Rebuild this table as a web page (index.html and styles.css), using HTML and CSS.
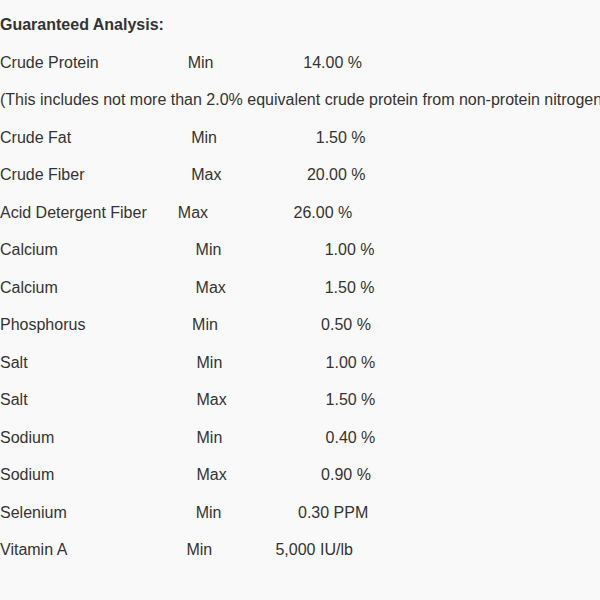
FILE: index.html
```html
<!DOCTYPE html>
<html lang="en">
<head>
<meta charset="utf-8">
<title>Guaranteed Analysis</title>
<link rel="stylesheet" href="styles.css">
</head>
<body>
<div class="sheet">
<p class="line heading">Guaranteed Analysis:</p>
<p class="line"><span class="name">Crude Protein</span>                    <span class="qual">Min</span>                    <span class="val">14.00 %</span></p>
<p class="line">(This includes not more than 2.0% equivalent crude protein from non-protein nitrogen)</p>
<p class="line"><span class="name">Crude Fat</span>                           <span class="qual">Min</span>                      <span class="val">1.50 %</span></p>
<p class="line"><span class="name">Crude Fiber</span>                        <span class="qual">Max</span>                   <span class="val">20.00 %</span></p>
<p class="line"><span class="name">Acid Detergent Fiber</span>       <span class="qual">Max</span>                   <span class="val">26.00 %</span></p>
<p class="line"><span class="name">Calcium</span>                               <span class="qual">Min</span>                       <span class="val">1.00 %</span></p>
<p class="line"><span class="name">Calcium</span>                               <span class="qual">Max</span>                      <span class="val">1.50 %</span></p>
<p class="line"><span class="name">Phosphorus</span>                        <span class="qual">Min</span>                       <span class="val">0.50 %</span></p>
<p class="line"><span class="name">Salt</span>                                      <span class="qual">Min</span>                       <span class="val">1.00 %</span></p>
<p class="line"><span class="name">Salt</span>                                      <span class="qual">Max</span>                      <span class="val">1.50 %</span></p>
<p class="line"><span class="name">Sodium</span>                                <span class="qual">Min</span>                       <span class="val">0.40 %</span></p>
<p class="line"><span class="name">Sodium</span>                                <span class="qual">Max</span>                     <span class="val">0.90 %</span></p>
<p class="line"><span class="name">Selenium</span>                             <span class="qual">Min</span>                 <span class="val">0.30 PPM</span></p>
<p class="line"><span class="name">Vitamin A</span>                           <span class="qual">Min</span>              <span class="val">5,000 IU/lb</span></p>
</div>
</body>
</html>
```
FILE: styles.css
```css
html, body {
  margin: 0;
  padding: 0;
  background: #f9f9f9;
  overflow: hidden;
}

body {
  font-family: "Liberation Sans", Arial, Helvetica, sans-serif;
  font-size: 16px;
  color: #333333;
}

.sheet {
  display: flex;
  flex-direction: column;
  gap: 13.5px;
  padding-top: 13px;
}

.line {
  margin: 0;
  line-height: 24px;
  white-space: pre;
}

.heading {
  font-weight: bold;
}

.val {
  margin-left: 1px;
}
```
